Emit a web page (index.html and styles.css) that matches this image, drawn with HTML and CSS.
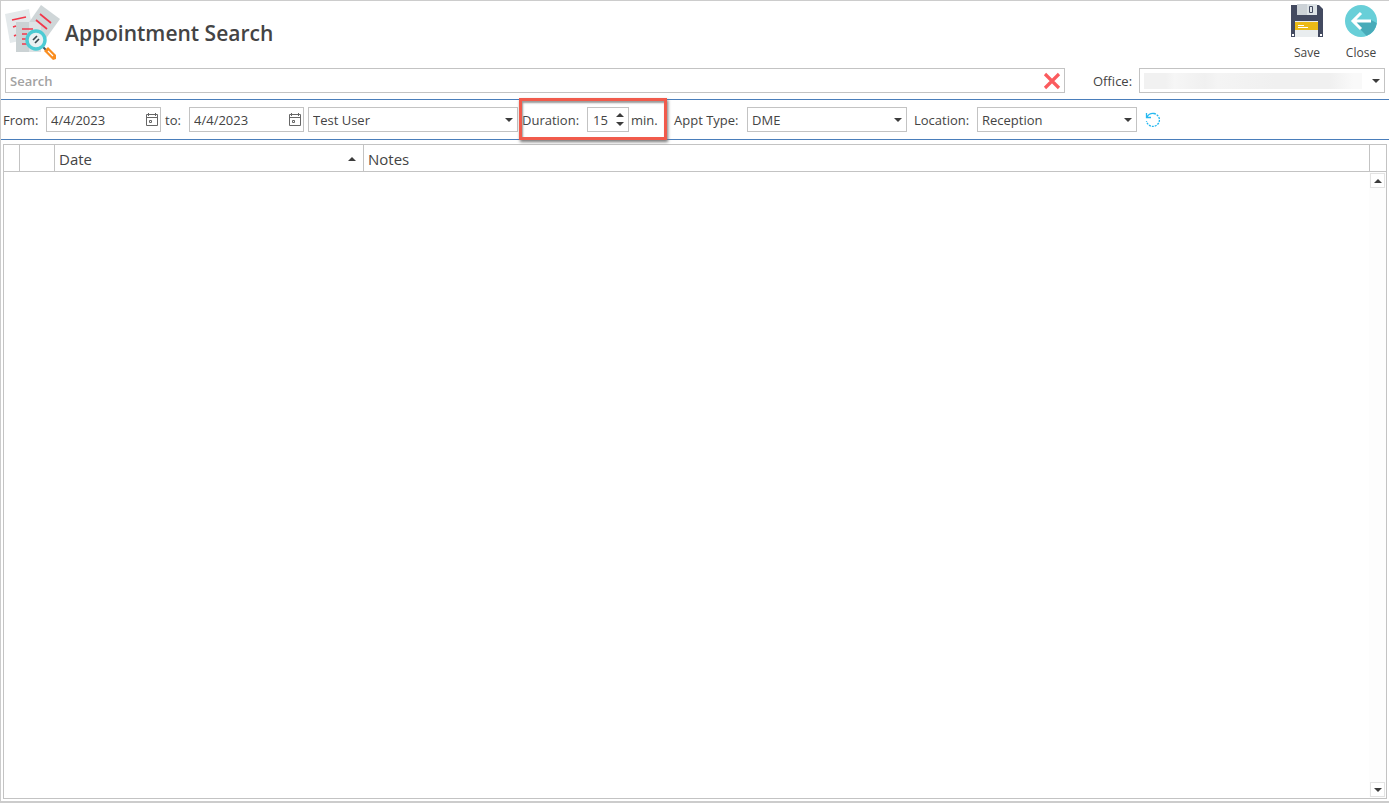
FILE: index.html
```html
<!DOCTYPE html>
<html lang="en">
<head>
<meta charset="utf-8">
<title>Appointment Search</title>
<link rel="stylesheet" href="styles.css">
</head>
<body>
<main class="window">
  <header class="header">
    <svg class="logo" viewBox="0 0 56 56" aria-hidden="true">
      <path fill="#e4e9eb" d="M0 9 24 4l5 29-24 5z"/>
      <path fill="#cfd6d8" d="M36 0 55 14 37 39 18 26z"/>
      <path fill="#cbd2d4" d="M11 17h13v30H11z"/>
      <path fill="#dde3e5" d="M24 17h12v30H24z"/>
      <g stroke="#f2384b" stroke-width="1.7" fill="none">
        <path d="m7 15 14-3M8 22l3-1M9 31l2-1M35 9l11 9M31 15l11 9M17 24h11M17 29h5M17 34h4M17 39h5"/>
      </g>
      <path stroke="#455a64" stroke-width="2" d="m38 42 3 3"/>
      <circle cx="31" cy="35" r="9" fill="#e9f1f3" stroke="#4ccbd4" stroke-width="3.4"/>
      <path stroke="#37474f" stroke-width="1.7" d="m28 35 4-4M30 38l4-4"/>
      <path fill="#f98d20" d="m39 46 4-4 8 8v4l-3 1z"/>
      <path stroke="#fff" stroke-width="1.3" d="m43 46 5 5"/>
    </svg>
    <h1 class="title">Appointment Search</h1>
    <button class="action" type="button">
      <svg viewBox="0 0 32 34" class="action-icon" aria-hidden="true">
        <path fill="#434a60" d="M0 1h28l4 4v28H0z"/>
        <path fill="#ccd2d7" d="M6 0h10v11H6z"/>
        <path fill="#dde3e6" d="M16 0h10v11H16z"/>
        <path fill="#e1e6e9" stroke="#434a60" d="M18.500 2.500h3v6h-3z"/>
        <path fill="#e9edef" d="M4 17h23v16H4z"/>
        <path fill="#ebba16" d="M4 18h23v8H4z"/>
        <path fill="#fff" d="M7 21h6v1H7zM7 23h10v1H7z"/>
        <path fill="#fff" d="M1 30h2v2H1zM29 30h2v2h-2z"/>
      </svg>
      <span>Save</span>
    </button>
    <button class="action" type="button">
      <svg viewBox="0 0 32 34" class="action-icon" aria-hidden="true">
        <circle cx="16" cy="17" r="16" fill="#68cfd8"/>
        <path fill="#48abb9" d="m14 24 7.500 7.800A16 16 0 0 0 31.800 19L26 16H11z"/>
        <path fill="none" stroke="#fff" stroke-width="3" d="M26 17H9M16 9l-8 8 8 8"/>
      </svg>
      <span>Close</span>
    </button>
  </header>

  <div class="search-row">
    <div class="search-box">
      <input class="search-input" type="search" placeholder="Search" aria-label="Search">
      <button class="clear" type="button" aria-label="Clear search">
        <svg viewBox="0 0 18 18" width="18" height="18"><path d="m2 2 14 14M16 2 2 16" stroke="#fb5b5e" stroke-width="3.200"/></svg>
      </button>
    </div>
    <label class="office-label" for="office">Office:</label>
    <div class="select office">
      <select id="office"><option></option></select>
      <span class="redacted"></span>
      <svg class="arrow" viewBox="0 0 8 4"><path d="M0 0h8L4 4z"/></svg>
    </div>
  </div>

  <div class="filters">
    <label class="from-label" for="from">From:</label>
    <div class="date">
      <input id="from" type="text" value="4/4/2023">
      <button type="button" aria-label="Pick start date"><svg viewBox="0 0 14 14" width="14" height="14"><path d="M1.500 1.500h11v11h-11zM1 4.500h12M3.500 0v3M10.500 0v3M4.500 7.500h2v2h-2z"/></svg></button>
    </div>
    <label class="to-label" for="to">to:</label>
    <div class="date">
      <input id="to" type="text" value="4/4/2023">
      <button type="button" aria-label="Pick end date"><svg viewBox="0 0 14 14" width="14" height="14"><path d="M1.500 1.500h11v11h-11zM1 4.500h12M3.500 0v3M10.500 0v3M4.500 7.500h2v2h-2z"/></svg></button>
    </div>
    <div class="select user">
      <select aria-label="User"><option>Test User</option></select>
      <svg class="arrow" viewBox="0 0 8 4"><path d="M0 0h8L4 4z"/></svg>
    </div>
    <div class="duration">
      <label class="duration-label" for="duration">Duration:</label>
      <div class="spinner">
        <input id="duration" type="text" value="15">
        <div class="steps">
          <button type="button" aria-label="Increase"><svg viewBox="0 0 8 4"><path d="M0 4h8L4 0z"/></svg></button>
          <button type="button" aria-label="Decrease"><svg viewBox="0 0 8 4"><path d="M0 0h8L4 4z"/></svg></button>
        </div>
      </div>
      <span>min.</span>
    </div>
    <label class="type-label" for="type">Appt Type:</label>
    <div class="select">
      <select id="type"><option>DME</option></select>
      <svg class="arrow" viewBox="0 0 8 4"><path d="M0 0h8L4 4z"/></svg>
    </div>
    <label class="location-label" for="location">Location:</label>
    <div class="select">
      <select id="location"><option>Reception</option></select>
      <svg class="arrow" viewBox="0 0 8 4"><path d="M0 0h8L4 4z"/></svg>
    </div>
    <button class="refresh" type="button" aria-label="Refresh">
      <svg viewBox="0 0 16 16" width="16" height="16" fill="none" stroke="#25b8f0">
        <path d="M1.500 1v4.500H6M2 5a7 7 0 0 1 7-3.500" stroke-width="1.300"/>
        <path d="M9 1.500A6.500 6.500 0 1 1 1.500 9" stroke-width="1.300" stroke-dasharray="2 1"/>
      </svg>
    </button>
  </div>

  <section class="grid">
    <table class="results">
      <thead>
        <tr>
          <th class="col-mark"></th>
          <th class="col-icon"></th>
          <th class="col-date"><div class="sort">Date <svg viewBox="0 0 8 4"><path d="M0 4h8L4 0z"/></svg></div></th>
          <th>Notes</th>
          <th class="col-scroll"></th>
        </tr>
      </thead>
    </table>
    <div class="scroll">
      <button type="button" aria-label="Scroll up"><svg viewBox="0 0 8 4"><path d="M0 4h8L4 0z"/></svg></button>
      <button type="button" aria-label="Scroll down"><svg viewBox="0 0 8 4"><path d="M0 0h8L4 4z"/></svg></button>
    </div>
  </section>
</main>
</body>
</html>
```
FILE: styles.css
```css
* { box-sizing: border-box; }
body {
  margin: 0;
  background: #fff;
  color: #444;
  font: 13px/20px "Open Sans", "Noto Sans", sans-serif;
}
button, input, select { font: inherit; color: inherit; }
button {
  display: grid;
  place-items: center;
  padding: 0;
  border: 0;
  background: none;
}
input, select {
  min-width: 0;
  border: 0;
  outline: 0;
  background: none;
}
.window {
  display: flex;
  flex-direction: column;
  height: 100vh;
  border: 1px solid #ccc;
  border-right: 0;
  border-bottom: 2px solid #ccc;
}
.header {
  display: flex;
  align-items: flex-start;
  height: 67px;
  padding: 3px 1px 0 4px;
}
.logo { width: 56px; height: 56px; margin-top: 1px; }
.title {
  flex: 1;
  margin: 13px 0 0 4px;
  font-size: 21px;
  line-height: 32px;
  font-weight: 600;
}
.action {
  width: 54px;
  justify-items: center;
  font-size: 12px;
  line-height: 16px;
  gap: 7px;
}
.action-icon { width: 32px; height: 34px; }
.search-row {
  display: flex;
  align-items: center;
  height: 25px;
  padding: 0 4px;
}
.search-box, .select, .date, .spinner {
  display: flex;
  height: 25px;
  border: 1px solid #c3c3c3;
  background: #fff;
}
.search-box { flex: 1; }
.search-input { flex: 1; padding: 0 4px; font-weight: 600; }
.search-input::placeholder { color: #a2a2a2; opacity: 1; }
.clear { width: 24px; }
.office-label { width: 74px; padding-left: 28px; }
.select {
  position: relative;
  width: 160px;
}
.select select {
  flex: 1;
  padding: 0 20px 0 4px;
  appearance: none;
}
.select.office { width: 246px; }
.select.user { width: 210px; margin: 0 4px; }
.redacted {
  position: absolute;
  inset: 4px 22px 3px 4px;
  background: linear-gradient(90deg, #f1f1f1 0, #f1f1f1 10%, #f6f6f6 14%, #f0f0f0 28%, #f4f4f4 34%, #f0f0f0 60%, #f0f0f0 85%, #f9f9f9 96%);
  pointer-events: none;
}
.arrow {
  position: absolute;
  right: 4px;
  top: 10px;
  pointer-events: none;
}
.arrow, .steps svg, .sort svg, .scroll svg {
  width: 8px;
  height: 4px;
  fill: #3c3c3c;
}
.filters {
  display: flex;
  align-items: center;
  height: 41px;
  margin-top: 6px;
  padding-left: 2px;
  border: solid #4a7ebb;
  border-width: 1px 0;
}
.from-label { width: 43px; }
.to-label { width: 28px; padding-left: 4px; }
.date { width: 115px; }
.date input { flex: 1; padding: 0 4px; }
.date button { width: 17px; }
.date svg { fill: none; stroke: #666; }
.duration {
  position: relative;
  display: flex;
  align-items: center;
  width: 152px;
}
.duration::after {
  content: "";
  position: absolute;
  inset: -9px 7px -8px -3px;
  border: 3px solid #f15b4c;
  box-shadow: 1px 2px 3px #777, inset 1px 2px 2px #999;
  pointer-events: none;
}
.duration-label { width: 65px; }
.spinner { width: 42px; margin-right: 2px; }
.spinner input { width: 24px; padding: 0 0 0 5px; }
.steps { display: grid; width: 16px; padding: 2px 0; }
.type-label { width: 73px; }
.location-label { width: 70px; padding-left: 7px; }
.refresh { margin-left: 8px; }
.grid {
  display: flex;
  flex: 1;
  flex-direction: column;
  margin: 4px 2px 2px;
  border: 1px solid #c3c3c3;
}
.results {
  width: 100%;
  table-layout: fixed;
  border-collapse: separate;
  border-spacing: 0;
  font-size: 15px;
}
.results th {
  height: 27px;
  padding: 2px 4px 0;
  border-right: 1px solid #c3c3c3;
  border-bottom: 1px solid #c3c3c3;
  font-weight: 400;
  text-align: left;
}
.results .col-mark { width: 16px; }
.results .col-icon { width: 35px; }
.results .col-date { width: 309px; }
.results .col-scroll { width: 16px; border-right: 0; }
.sort {
  display: flex;
  align-items: center;
  justify-content: space-between;
  padding-right: 3px;
}
.scroll {
  display: flex;
  flex: 1;
  flex-direction: column;
  justify-content: space-between;
  align-self: flex-end;
  width: 17px;
  padding: 1px;
  background: #fdfdfd;
}
.scroll button {
  height: 15px;
  border: 1px solid #e3e3e3;
  background: #fff;
}
```
